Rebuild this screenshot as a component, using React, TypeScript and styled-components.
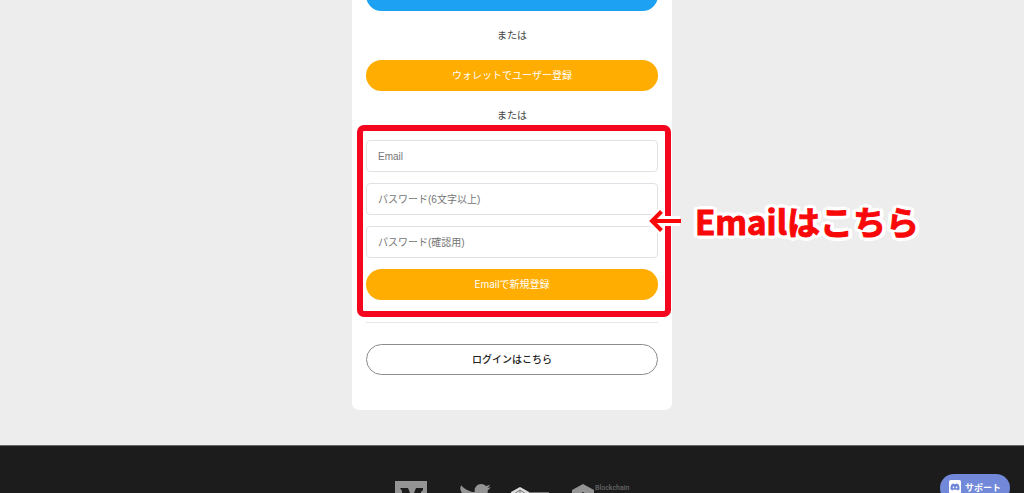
import React from "react";
import styled, { createGlobalStyle, css } from "styled-components";
import { FaDiscord, FaTwitter } from "react-icons/fa";

const GlobalStyle = createGlobalStyle`
  *, *::before, *::after { box-sizing: border-box; }
  body {
    margin: 0;
    background: #ededed;
    color: #444;
    font-family: Inter, "Noto Sans CJK JP", sans-serif;
    font-size: 10px;
    line-height: 16px;
  }
`;

const Page = styled.div`
  display: flex;
  flex-direction: column;
  height: 100vh;
  overflow: hidden;
`;

const Main = styled.main`
  display: flex;
  flex: none;
  justify-content: center;
  margin-top: -34px;
  padding-bottom: 35px;
`;

const Card = styled.section`
  width: 320px;
  max-width: 100%;
  padding: 14px 14px 35px;
  border-radius: 7px;
  background: #fff;
`;

type Tone = "twitter" | "primary" | "outline";

const tones = {
  twitter: css`
    background: #1da1f2;
    color: #fff;
  `,
  primary: css`
    background: #ffad00;
    color: #fff;
  `,
  outline: css`
    border: 1px solid #8c8c8c;
    background: #fff;
    color: #222;
    font-weight: 500;
  `,
};

const PillButton = styled.button<{ $tone: Tone }>`
  display: block;
  width: 100%;
  height: 31px;
  padding: 0 0 2px;
  border: 0;
  border-radius: 16px;
  font: inherit;
  cursor: pointer;
  ${({ $tone }) => tones[$tone]}
`;

const Or = styled.p`
  margin: 0;
  padding: 16px 0 17px;
  text-align: center;
`;

const Form = styled.form`
  position: relative;
  display: flex;
  flex-direction: column;
  gap: 11px;
`;

const Highlight = styled.div`
  position: absolute;
  inset: -15px -13px -17px -9px;
  border: 6px solid #f5061f;
  border-radius: 7px;
  pointer-events: none;
`;

const Field = styled.input`
  width: 100%;
  height: 32px;
  padding: 0 11px;
  border: 1px solid #dfe1e6;
  border-radius: 4px;
  background: #fff;
  font-family: "Liberation Sans", "Noto Sans CJK JP", sans-serif;
  font-size: 10px;
  color: #444;

  &::placeholder {
    color: #757575;
    opacity: 1;
  }
`;

const Divider = styled.hr`
  margin: 22px 0 21px;
  border: 0;
  border-top: 1px solid #e6e6e6;
`;

const Callout = styled.div`
  position: absolute;
  top: 61px;
  left: 283px;
  display: flex;
  align-items: center;
  gap: 12px;
  pointer-events: none;
`;

const CalloutText = styled.span`
  color: #f80808;
  font-family: "Noto Sans CJK JP", sans-serif;
  font-size: 33px;
  font-weight: 700;
  line-height: 40px;
  white-space: nowrap;
  -webkit-text-stroke: 1px #f80808;
  text-shadow: 4px 0 #fff, -4px 0 #fff, 0 4px #fff, 0 -4px #fff, 3px 3px #fff,
    -3px 3px #fff, 3px -3px #fff, -3px -3px #fff, 4px 2px #fff, -4px 2px #fff,
    4px -2px #fff, -4px -2px #fff;
`;

const Footer = styled.footer`
  display: flex;
  flex: 1 0 80px;
  align-items: flex-start;
  justify-content: center;
  padding-top: 35px;
  border-top: 1px solid #666;
  background: #1c1c1c;
  color: #949494;
`;

const FooterLink = styled.a<{ $width: number; $gap?: number }>`
  display: flex;
  width: ${({ $width }) => $width}px;
  height: 36px;
  margin-right: ${({ $gap = 0 }) => $gap}px;
  color: inherit;
  text-decoration: none;

  svg {
    flex: none;
  }
`;

const LogoText = styled.span`
  padding-left: 1px;
  color: #666;
  font-family: Roboto, sans-serif;
  font-size: 7px;
  font-weight: 500;
  line-height: 15px;
`;

const Support = styled.button`
  position: fixed;
  top: 474px;
  right: 14px;
  display: flex;
  align-items: center;
  justify-content: center;
  gap: 4px;
  width: 70px;
  height: 28px;
  padding: 0 0 2px;
  border: 0;
  border-radius: 14px;
  background: #7289da;
  color: #fff;
  font-family: "Noto Sans CJK JP", sans-serif;
  font-size: 9px;
  font-weight: 700;
  cursor: pointer;
`;

const DiscordBadge = styled.span`
  display: grid;
  place-items: center;
  width: 12px;
  height: 14px;
  border-radius: 2px;
  background: #fff;
  color: #7289da;
`;

export default function App() {
  return (
    <Page>
      <GlobalStyle />
      <Main>
        <Card>
          <PillButton type="button" $tone="twitter" aria-label="Twitter" />
          <Or>または</Or>
          <PillButton type="button" $tone="primary">
            ウォレットでユーザー登録
          </PillButton>
          <Or>または</Or>
          <Form onSubmit={(e) => e.preventDefault()}>
            <Field type="email" placeholder="Email" aria-label="Email" />
            <Field
              type="password"
              placeholder="パスワード(6文字以上)"
              aria-label="パスワード(6文字以上)"
            />
            <Field
              type="password"
              placeholder="パスワード(確認用)"
              aria-label="パスワード(確認用)"
            />
            <PillButton type="submit" $tone="primary">
              Emailで新規登録
            </PillButton>
            <Highlight />
            <Callout>
              <svg width="34" height="28" viewBox="0 0 34 28" fill="none" aria-hidden="true">
                <path d="M13 5L3 14L13 23M4 14H31" stroke="#fff" strokeWidth="10" strokeLinejoin="round" />
                <path d="M12.500 4.500L3 14L12.500 23.500M3 14H32" stroke="#f80808" strokeWidth="4" />
              </svg>
              <CalloutText>Emailはこちら</CalloutText>
            </Callout>
          </Form>
          <Divider />
          <PillButton type="button" $tone="outline">
            ログインはこちら
          </PillButton>
        </Card>
      </Main>
      <Footer>
        <FooterLink href="#" $width={32} $gap={32} aria-label="Medium">
          <svg width="32" height="32" viewBox="0 0 32 32" aria-hidden="true">
            <path fill="currentColor" d="M0 0h32v32H0z" />
            <path fill="#1c1c1c" d="M5 7h8l4 10 4-10h7v2l-2 2v13l2 2h-9V13l-6 13-6-13v9l3 4H4l3-4V10z" />
          </svg>
        </FooterLink>
        <FooterLink href="#" $width={32} $gap={19} aria-label="Twitter">
          <FaTwitter size={32} />
        </FooterLink>
        <FooterLink href="#" $width={39} $gap={23} aria-label="Partner">
          <svg width="39" height="32" viewBox="0 0 39 32" aria-hidden="true">
            <path fill="#ddd" d="M10 6l9 5v11l-9 5-9-5V11z" />
            <path fill="none" stroke="#777" d="M4 13l6-4 6 4M10 9v4" />
            <path fill="#777" d="M19 11h20v1H19z" />
          </svg>
        </FooterLink>
        <FooterLink href="#" $width={57}>
          <svg width="22" height="32" viewBox="0 0 22 32" aria-hidden="true">
            <path fill="currentColor" d="M11 3l11 6v3l-5 3-6-4-6 4v8l6 3 6-3 5 3-11 6-11-6V9z" />
          </svg>
          <LogoText>Blockchain</LogoText>
        </FooterLink>
      </Footer>
      <Support type="button">
        <DiscordBadge>
          <FaDiscord size={10} />
        </DiscordBadge>
        サポート
      </Support>
    </Page>
  );
}
